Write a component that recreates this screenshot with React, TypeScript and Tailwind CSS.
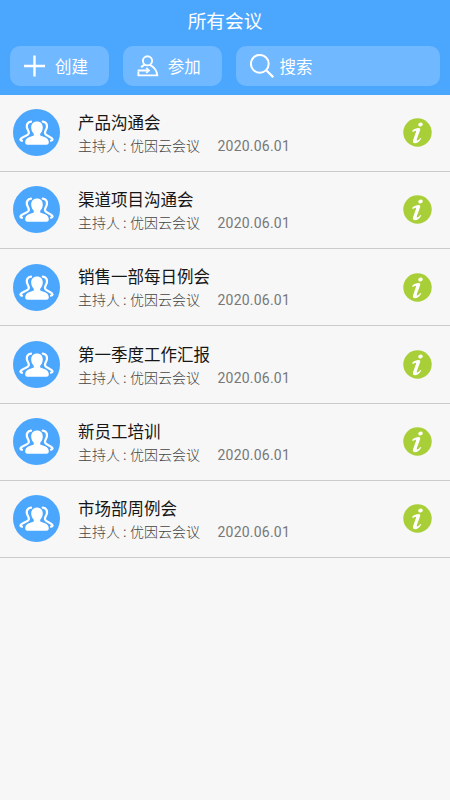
const meetings = [
  { id: 1, name: "产品沟通会", host: "优因云会议", date: "2020.06.01" },
  { id: 2, name: "渠道项目沟通会", host: "优因云会议", date: "2020.06.01" },
  { id: 3, name: "销售一部每日例会", host: "优因云会议", date: "2020.06.01" },
  { id: 4, name: "第一季度工作汇报", host: "优因云会议", date: "2020.06.01" },
  { id: 5, name: "新员工培训", host: "优因云会议", date: "2020.06.01" },
  { id: 6, name: "市场部周例会", host: "优因云会议", date: "2020.06.01" },
];

function PlusIcon() {
  return (
    <svg className="h-[22px] w-[22px]" viewBox="0 0 22 22" fill="none" stroke="white" strokeWidth="2.4" aria-hidden>
      <path d="M10.5.5v21M0 11h21" />
    </svg>
  );
}

function JoinIcon() {
  return (
    <svg className="h-[22px] w-[22px]" viewBox="0 0 22 22" fill="none" stroke="white" strokeWidth="1.9" aria-hidden>
      <circle cx="10.5" cy="5.8" r="4.6" />
      <path d="M7.6 9.6C6.2 10.6 5 11.3 4.2 12.4M12.8 9.8c4 1.8 6.9 5 7.5 10.6H1.4v-3.6M.6 15.5h10.8" />
      <path d="m9.2 12.8 2.7 2.7-2.7 2.4" />
    </svg>
  );
}

function SearchIcon() {
  return (
    <svg className="h-6 w-6" viewBox="0 0 24 24" fill="none" stroke="white" strokeWidth="2" aria-hidden>
      <circle cx="9.8" cy="9.8" r="8.9" />
      <path d="m16.2 16.2 7 7" strokeWidth="2.3" />
    </svg>
  );
}

function GroupIcon() {
  return (
    <svg className="size-[47px] shrink-0" viewBox="0 0 47 47" aria-hidden>
      <circle cx="23.5" cy="23.5" r="23.5" fill="#4ba6fe" />
      <g fill="none" stroke="white" strokeWidth="2.3" strokeLinecap="round" strokeLinejoin="round">
        <path d="M18 12.7c-3.4.3-4.6 2.7-4.1 5.7.4 2.4 2.6 3.9 1.8 6.2-1 2.6-7.6 3.2-8.2 5.6-.1.8.4 1.3 1.4 1.5" />
        <path d="M29.8 12.7c3.4.3 4.6 2.7 4.1 5.7-.4 2.4-2.6 3.9-1.8 6.2 1 2.6 6.8 3.2 7.4 5.6.1.8-.4 1.3-1.4 1.5" />
      </g>
      <path
        fill="white"
        d="M24 12.6c-3.7 0-5.9 2.6-5.8 6 .1 2.9 1.1 4.7 2.6 6.2v1.6c-3.4 1.4-8.3 1.8-8.6 6.7 0 1.9.6 2.7 2.3 2.7h19c1.7 0 2.3-.8 2.3-2.7-.3-4.9-5.2-5.3-8.6-6.7v-1.6c1.5-1.5 2.5-3.3 2.6-6.2.1-3.4-2.1-6-5.8-6Z"
      />
    </svg>
  );
}

function InfoIcon() {
  return (
    <svg className="size-[29px]" viewBox="0 0 29 29" aria-hidden>
      <circle cx="14.5" cy="14.5" r="14.2" fill="#a9cf38" />
      <ellipse cx="17.5" cy="6.5" rx="2.3" ry="1.9" fill="white" transform="rotate(-20 17.5 6.5)" />
      <path
        fill="white"
        d="M9.1 12.9c1.8-2.1 4.5-2.9 6.5-2.9 1.5 0 1.9.9 1.5 2.2l-3.2 8.9c-.5 1.4.1 1.8 1.1 1.1.9-.6 1.6-1.3 2.4-2.3l.9.6c-1.7 3-4 4.8-6.2 4.8-2.1 0-2.6-1.7-1.9-3.6l2.6-7.3c.5-1.4.2-1.8-.8-1.5-.9.2-1.5.5-2.3 1Z"
      />
    </svg>
  );
}

export default function App() {
  return (
    <main className="min-h-screen w-full bg-[#f7f7f7] font-['Noto_Sans_CJK_SC',sans-serif]">
      <header className="h-[94.5px] bg-[#4ba6fe] text-white">
        <h1 className="h-[46px] pt-1 text-center text-[18.7px] leading-8">所有会议</h1>
        <div className="flex h-[40px] px-[10px] text-[16.5px]">
          <button className="flex w-[99px] items-center gap-[9px] rounded-[10px] bg-[#70b8ff] pl-[14px]">
            <PlusIcon />
            <span>创建</span>
          </button>
          <button className="ml-[14px] flex w-[99px] items-center gap-[9px] rounded-[10px] bg-[#70b8ff] pl-[14px]">
            <JoinIcon />
            <span>参加</span>
          </button>
          <button className="ml-[14px] flex w-[205px] items-center gap-[6px] rounded-[10px] bg-[#70b8ff] pl-[14px]">
            <SearchIcon />
            <span>搜索</span>
          </button>
        </div>
      </header>

      <ul>
        {meetings.map((m) => (
          <li
            key={m.id}
            className="flex h-[77.25px] items-center border-b border-[#cbcbcb] pr-[18px] pl-[13px]"
          >
            <GroupIcon />
            <div className="ml-[18px] flex-1 pt-[2.5px]">
              <h2 className="text-[16.5px] leading-6 text-[#161616]">{m.name}</h2>
              <p className="flex text-[14px] leading-[23px] font-light text-[#444]">
                <span className="w-[42px]">主持人</span>
                <span className="w-[10px] pl-[3px]">:</span>
                <span className="w-[87.5px]">{m.host}</span>
                <span className="pt-px font-[Roboto,sans-serif] font-normal tracking-[0.22px] text-[#777]">
                  {m.date}
                </span>
              </p>
            </div>
            <button aria-label="详情">
              <InfoIcon />
            </button>
          </li>
        ))}
      </ul>
    </main>
  );
}
